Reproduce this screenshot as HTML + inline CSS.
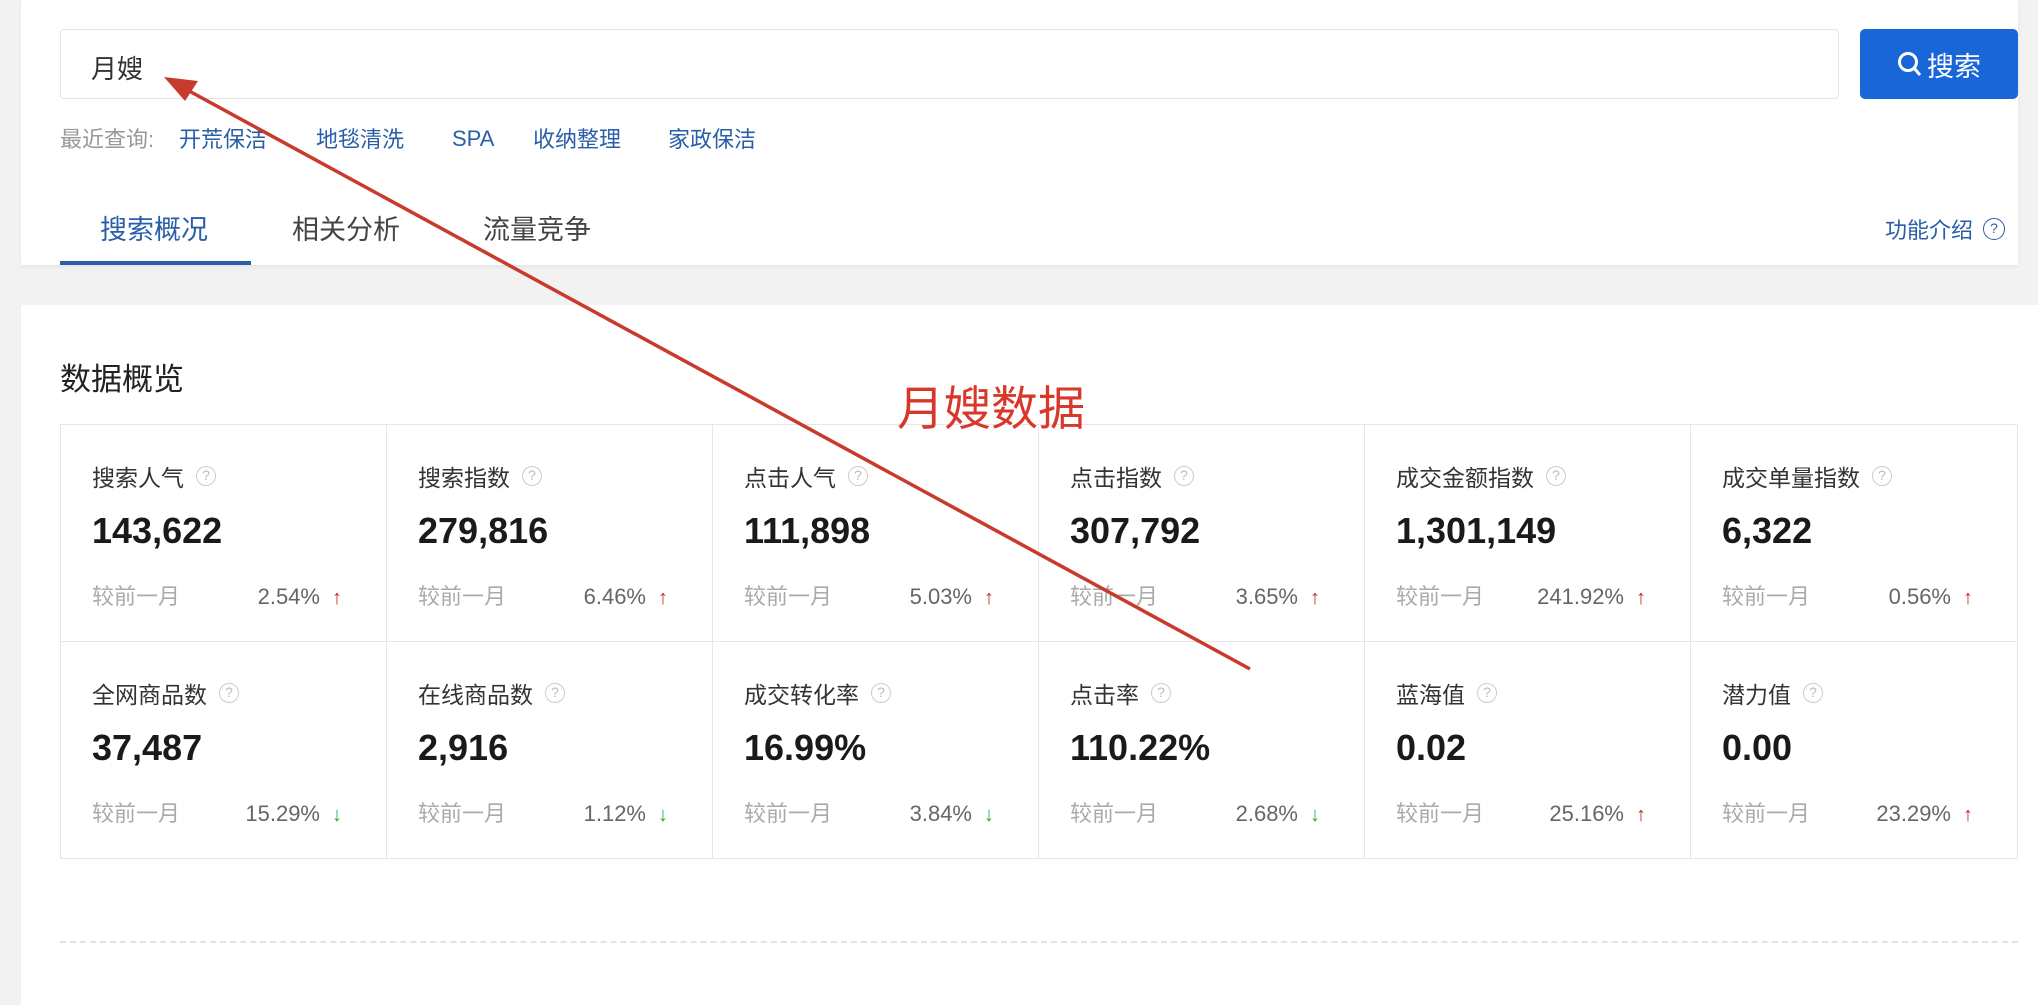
<!DOCTYPE html>
<html><head><meta charset="utf-8"><style>
*{margin:0;padding:0;box-sizing:border-box}
body{width:2038px;height:976px;background:#f2f2f2;position:relative;overflow:hidden;font-family:"Liberation Sans","Noto Sans CJK SC",sans-serif}
.abs{position:absolute;white-space:nowrap}
.card1{position:absolute;left:21px;top:0;width:1997px;height:265px;background:#fff;box-shadow:0 2px 4px rgba(0,0,0,.06)}
.card2{position:absolute;left:21px;top:305px;width:2017px;height:700px;background:#fff}
.input{position:absolute;left:60px;top:29px;width:1779px;height:70px;border:1.5px solid #e3e3e3;border-radius:4px;background:#fff}
.btn{position:absolute;left:1860px;top:29px;width:158px;height:70px;background:#1966d8;border-radius:5px;color:#fff;font-size:27px;display:flex;align-items:center;justify-content:center}
.link{color:#2a5ea8;font-size:22px;top:125px;height:30px;line-height:30px}
.tab{font-size:27px;top:208px;color:#444}
.grid{position:absolute;left:60px;top:424px;width:1958px;height:435px;border:1.5px solid #e6e6e6}
.cell{position:absolute;width:326px;height:217px;border-right:1.5px solid #e6e6e6;border-bottom:1.5px solid #e6e6e6}
.lab{position:absolute;left:31px;top:34px;font-size:23px;color:#333;display:flex;align-items:center}
.q{display:inline-block;width:20px;height:20px;border:1.5px solid #ccc;border-radius:50%;color:#bbb;font-size:14px;line-height:17px;text-align:center;margin-left:12px}
.val{position:absolute;left:31px;top:85px;font-size:36px;font-weight:bold;color:#1a1a1a}
.cmp{position:absolute;left:31px;top:157px;font-size:22px;color:#aaa;line-height:30px}
.pct{position:absolute;right:44px;top:157px;font-size:22px;color:#666;line-height:30px;height:30px}
.up,.dn{display:inline-block;margin-left:12px;font-size:20px;font-weight:bold;line-height:30px}
.up{color:#c62b25}.dn{color:#2aa53a}
</style></head><body>
<div class="card1"></div>
<div class="card2"></div>
<div class="input"></div>
<div class="abs" style="left:91px;top:49px;font-size:26px;color:#333">月嫂</div>
<div class="btn"><svg width="26" height="28" viewBox="0 0 26 28" style="margin-right:4px"><circle cx="11" cy="12" r="8.5" fill="none" stroke="#fff" stroke-width="3"/><line x1="17" y1="18" x2="23" y2="25" stroke="#fff" stroke-width="3"/></svg>搜索</div>
<div class="abs" style="left:60px;top:125px;font-size:22px;color:#999;line-height:30px">最近查询:</div>
<div class="abs link" style="left:179px">开荒保洁</div>
<div class="abs link" style="left:316px">地毯清洗</div>
<div class="abs link" style="left:452px;top:124px">SPA</div>
<div class="abs link" style="left:533px">收纳整理</div>
<div class="abs link" style="left:668px">家政保洁</div>
<div class="abs tab" style="left:100px;color:#2a5ea8">搜索概况</div>
<div class="abs tab" style="left:292px">相关分析</div>
<div class="abs tab" style="left:483px">流量竞争</div>
<div class="abs" style="left:60px;top:261px;width:191px;height:4px;background:#2a5ea8"></div>
<div class="abs" style="left:1885px;top:213px;font-size:22px;color:#2a5ea8;display:flex;align-items:center">功能介绍<span class="q" style="border-color:#2a5ea8;color:#2a5ea8;width:22px;height:22px;line-height:19px;margin-left:10px">?</span></div>
<div class="abs" style="left:60px;top:354px;font-size:31px;color:#222">数据概览</div>
<div class="grid">
<div class="cell" style="left:0;top:0"><div class="lab">搜索人气<span class="q">?</span></div><div class="val">143,622</div><div class="cmp">较前一月</div><div class="pct">2.54%<span class="up">↑</span></div></div>
<div class="cell" style="left:326px;top:0"><div class="lab">搜索指数<span class="q">?</span></div><div class="val">279,816</div><div class="cmp">较前一月</div><div class="pct">6.46%<span class="up">↑</span></div></div>
<div class="cell" style="left:652px;top:0"><div class="lab">点击人气<span class="q">?</span></div><div class="val">111,898</div><div class="cmp">较前一月</div><div class="pct">5.03%<span class="up">↑</span></div></div>
<div class="cell" style="left:978px;top:0"><div class="lab">点击指数<span class="q">?</span></div><div class="val">307,792</div><div class="cmp">较前一月</div><div class="pct">3.65%<span class="up">↑</span></div></div>
<div class="cell" style="left:1304px;top:0"><div class="lab">成交金额指数<span class="q">?</span></div><div class="val">1,301,149</div><div class="cmp">较前一月</div><div class="pct">241.92%<span class="up">↑</span></div></div>
<div class="cell" style="left:1630px;top:0;border-right:none"><div class="lab">成交单量指数<span class="q">?</span></div><div class="val">6,322</div><div class="cmp">较前一月</div><div class="pct">0.56%<span class="up">↑</span></div></div>
<div class="cell" style="left:0;top:217px;border-bottom:none"><div class="lab">全网商品数<span class="q">?</span></div><div class="val">37,487</div><div class="cmp">较前一月</div><div class="pct">15.29%<span class="dn">↓</span></div></div>
<div class="cell" style="left:326px;top:217px;border-bottom:none"><div class="lab">在线商品数<span class="q">?</span></div><div class="val">2,916</div><div class="cmp">较前一月</div><div class="pct">1.12%<span class="dn">↓</span></div></div>
<div class="cell" style="left:652px;top:217px;border-bottom:none"><div class="lab">成交转化率<span class="q">?</span></div><div class="val">16.99%</div><div class="cmp">较前一月</div><div class="pct">3.84%<span class="dn">↓</span></div></div>
<div class="cell" style="left:978px;top:217px;border-bottom:none"><div class="lab">点击率<span class="q">?</span></div><div class="val">110.22%</div><div class="cmp">较前一月</div><div class="pct">2.68%<span class="dn">↓</span></div></div>
<div class="cell" style="left:1304px;top:217px;border-bottom:none"><div class="lab">蓝海值<span class="q">?</span></div><div class="val">0.02</div><div class="cmp">较前一月</div><div class="pct">25.16%<span class="up">↑</span></div></div>
<div class="cell" style="left:1630px;top:217px;border:none"><div class="lab">潜力值<span class="q">?</span></div><div class="val">0.00</div><div class="cmp">较前一月</div><div class="pct">23.29%<span class="up">↑</span></div></div>
</div>
<div class="abs" style="left:60px;top:941px;width:1958px;border-top:2px dashed #e3e3e3"></div>
<div class="abs" style="left:897px;top:370px;font-size:47px;color:#d9372a">月嫂数据</div>
<svg class="abs" style="left:0;top:0" width="2038" height="976"><line x1="180" y1="86" x2="1250" y2="669" stroke="#c83a2c" stroke-width="3.5"/><polygon points="164,77 198,81 185,101" fill="#c83a2c"/></svg>
</body></html>
